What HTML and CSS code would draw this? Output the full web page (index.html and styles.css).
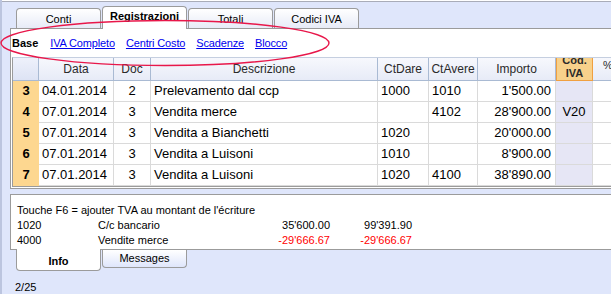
FILE: index.html
```html
<!DOCTYPE html>
<html>
<head>
<meta charset="utf-8">
<link rel="stylesheet" href="styles.css">
</head>
<body>
<div class="app">
  <div class="topline"></div>
  <div class="tabs">
    <div class="tab">Conti</div>
    <div class="tab active">Registrazioni</div>
    <div class="tab">Totali</div>
    <div class="tab">Codici IVA</div>
  </div>
  <div class="panel">
    <div class="views">
      <b class="view-current">Base</b>
      <a class="view-link">IVA Completo</a>
      <a class="view-link">Centri Costo</a>
      <a class="view-link">Scadenze</a>
      <a class="view-link">Blocco</a>
    </div>
    <div class="grid-wrap">
      <div class="grid">
        <div class="hc rn"></div>
        <div class="hc">Data</div>
        <div class="hc">Doc</div>
        <div class="hc">Descrizione</div>
        <div class="hc">CtDare</div>
        <div class="hc">CtAvere</div>
        <div class="hc">Importo</div>
        <div class="hc iva"><div class="two">Cod.<br>IVA</div></div>
        <div class="hc pct"><div class="pct-t">%</div></div>

        <div class="c rn">3</div><div class="c">04.01.2014</div><div class="c ctr">2</div><div class="c">Prelevamento dal ccp</div><div class="c">1000</div><div class="c">1010</div><div class="c num">1'500.00</div><div class="c ivac"></div><div class="c"></div>
        <div class="c rn">4</div><div class="c">07.01.2014</div><div class="c ctr">3</div><div class="c">Vendita merce</div><div class="c"></div><div class="c">4102</div><div class="c num">28'900.00</div><div class="c ivac ctr">V20</div><div class="c"></div>
        <div class="c rn">5</div><div class="c">07.01.2014</div><div class="c ctr">3</div><div class="c">Vendita a Bianchetti</div><div class="c">1020</div><div class="c"></div><div class="c num">20'000.00</div><div class="c ivac"></div><div class="c"></div>
        <div class="c rn">6</div><div class="c">07.01.2014</div><div class="c ctr">3</div><div class="c">Vendita a Luisoni</div><div class="c">1010</div><div class="c"></div><div class="c num">8'900.00</div><div class="c ivac"></div><div class="c"></div>
        <div class="c rn">7</div><div class="c">07.01.2014</div><div class="c ctr">3</div><div class="c">Vendita a Luisoni</div><div class="c">1020</div><div class="c">4100</div><div class="c num">38'890.00</div><div class="c ivac"></div><div class="c"></div>
      </div>
    </div>
  </div>
  <div class="info">
    <div class="info-line">Touche F6 = ajouter TVA au montant de l'écriture</div>
    <div class="info-row"><span class="acc">1020</span><span class="desc">C/c bancario</span><span class="amt">35'600.00</span><span class="amt">99'391.90</span></div>
    <div class="info-row neg"><span class="acc">4000</span><span class="desc">Vendite merce</span><span class="amt">-29'666.67</span><span class="amt">-29'666.67</span></div>
  </div>
  <div class="btabs">
    <div class="btab active">Info</div>
    <div class="btab">Messages</div>
  </div>
  <div class="status">2/25</div>
  <svg class="mark" width="340" height="60" viewBox="0 0 340 60">
    <ellipse cx="165" cy="24" rx="164" ry="22.5" fill="none" stroke="#e8174a" stroke-width="1.4"/>
  </svg>
</div>
</body>
</html>
```
FILE: styles.css
```css
* { box-sizing: border-box; }
html, body { margin: 0; padding: 0; }
body {
  width: 611px;
  height: 294px;
  overflow: hidden;
  background: #dfe6fb;
  font-family: "Liberation Sans", Arial, sans-serif;
  color: #000;
}
.app {
  position: relative;
  width: 611px;
  height: 294px;
  border-left: 2px solid #bcc5df;
}
.topline {
  height: 2px;
  border-top: 1px solid #fff;
  border-bottom: 1px solid #a9acb8;
}
.tabs {
  display: flex;
  align-items: flex-end;
  gap: 1px;
  height: 21px;
  margin-top: 5px;
  padding-left: 14px;
}
.tab {
  width: 85px;
  height: 20px;
  border: 1px solid #9b9b9b;
  border-bottom: none;
  border-radius: 4px 4px 0 0;
  background: linear-gradient(#ffffff, #e7ebf7);
  font-size: 11px;
  text-align: center;
  line-height: 20px;
  color: #000;
}
.tab.active {
  height: 23px;
  margin-bottom: -1px;
  background: #fff;
  font-weight: bold;
  position: relative;
  z-index: 2;
  line-height: 18px;
}
.panel {
  margin-left: 8px;
  border-top: 1px solid #9b9b9b;
  border-left: 1px solid #9b9b9b;
  border-bottom: 1px solid #9b9b9b;
  background: #fff;
  padding-bottom: 1px;
}
.views {
  height: 28px;
  display: flex;
  align-items: center;
  padding-left: 1px;
  font-size: 11px;
  gap: 11px;
}
.view-current { font-weight: bold; margin-right: 1px; }
.view-link { color: #0000ee; text-decoration: underline; letter-spacing: -0.15px; }
.grid-wrap {
  margin-left: 1px;
  border-left: 1px solid #9b9b9b;
  border-top: 1px solid #c5cfe0;
  border-bottom: 1px solid #9b9b9b;
  overflow: hidden;
}
.grid {
  display: grid;
  grid-template-columns: 26px 75px 37px 227px 51px 49px 78px 37px 40px;
  grid-template-rows: 23px repeat(5, 21px);
  width: 620px;
}
.hc {
  background: linear-gradient(#f7f8fd, #e7ebf7);
  border-right: 1px solid #a9bad3;
  border-bottom: 1px solid #a9bad3;
  font-size: 12px;
  color: #2a2a2a;
  text-align: center;
  line-height: 22px;
  overflow: hidden;
}
.hc.rn { background: linear-gradient(#eef1fb, #dde3f4); }
.hc.iva {
  background: #f8d18b;
  border-left: 1px solid #f0a040;
  border-right: 1px solid #f0a040;
  border-bottom: 1px solid #f0a040;
}
.two {
  font-size: 11px;
  font-weight: bold;
  line-height: 13px;
  margin-top: -4px;
}
.pct-t {
  text-align: left;
  padding-left: 10px;
  line-height: 14px;
  font-size: 11px;
}
.c {
  border-right: 1px solid #dadada;
  border-bottom: 1px solid #dadada;
  font-size: 13px;
  line-height: 20px;
  padding: 0 3px;
  white-space: nowrap;
  overflow: hidden;
}
.c.rn {
  background: #fdd790;
  font-weight: bold;
  text-align: center;
  border-right: none;
  border-bottom: 1px solid #fdd790;
}
.c.ctr { text-align: center; }
.c.num { text-align: right; padding-right: 4px; }
.c.ivac { background: #e6e6f5; }
.info {
  margin-top: 5px;
  margin-left: 8px;
  height: 56px;
  border-top: 1px solid #9b9b9b;
  border-left: 1px solid #9b9b9b;
  border-bottom: 1px solid #9b9b9b;
  background: #fff;
  padding: 8px 0 0 6px;
  font-size: 11px;
  line-height: 15px;
}
.info-row { display: flex; }
.acc { width: 81px; }
.desc { width: 150px; }
.amt { width: 82px; text-align: right; }
.neg .amt { color: #ff0000; }
.btabs {
  display: flex;
  gap: 1px;
  padding-left: 14px;
  margin-top: -1px;
  height: 22px;
  align-items: flex-start;
}
.btab {
  width: 85px;
  height: 18px;
  margin-top: 1px;
  border: 1px solid #9b9b9b;
  border-top: none;
  border-radius: 0 0 4px 4px;
  background: linear-gradient(#ffffff, #dfe6fb);
  font-size: 11px;
  text-align: center;
  line-height: 16px;
}
.btab.active {
  height: 22px;
  margin-top: 0;
  background: #fff;
  font-weight: bold;
  line-height: 24px;
}
.status {
  font-size: 11px;
  padding-left: 13px;
  margin-top: 10px;
}
.mark {
  position: absolute;
  left: -2px;
  top: 19px;
  pointer-events: none;
  z-index: 5;
}
```
